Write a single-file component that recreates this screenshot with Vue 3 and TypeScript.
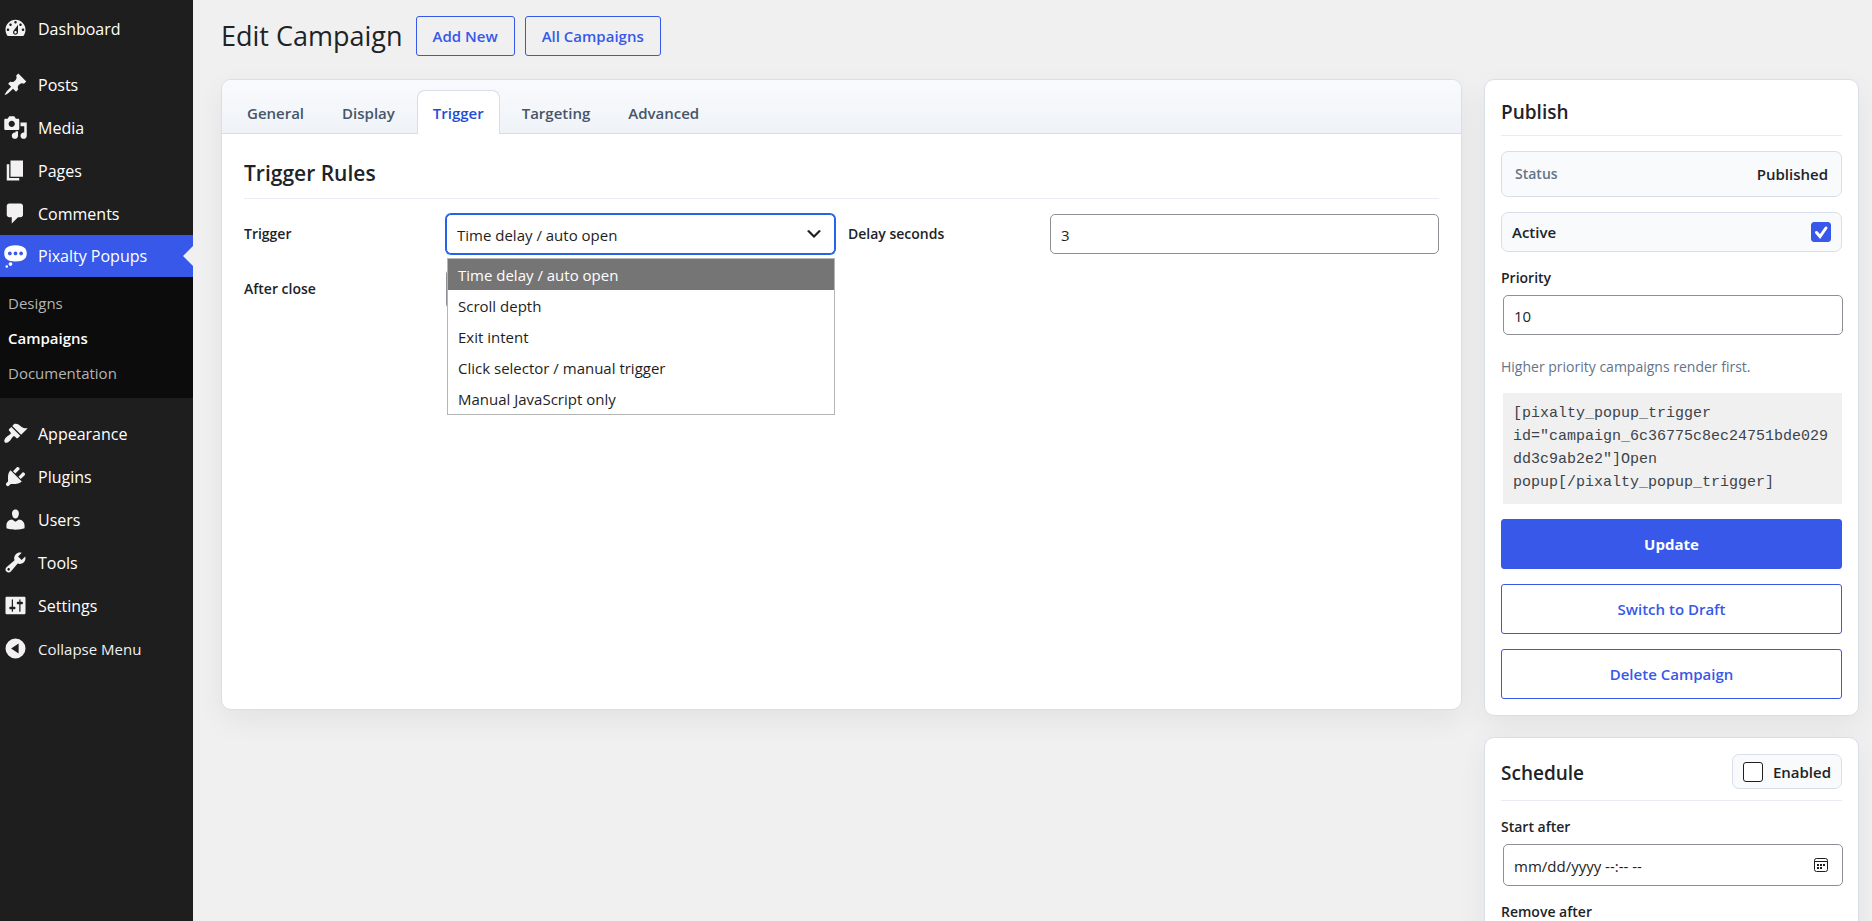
<script setup lang="ts">
import { ref } from 'vue'

interface MenuItem {
  label: string
  path: string
  current?: boolean
  gap?: boolean
  small?: boolean
}

const topMenu: MenuItem[] = [
  { label: 'Dashboard', path: 'M3.76 16h12.48c1.1-1.37 1.76-3.11 1.76-5 0-4.42-3.58-8-8-8s-8 3.58-8 8c0 1.89.66 3.63 1.76 5zM10 4c.55 0 1 .45 1 1s-.45 1-1 1-1-.45-1-1 .45-1 1-1zM6 6c.55 0 1 .45 1 1s-.45 1-1 1-1-.45-1-1 .45-1 1-1zm8 0c.55 0 1 .45 1 1s-.45 1-1 1-1-.45-1-1 .45-1 1-1zm-5.37 5.55L12 7v6c0 1.1-.9 2-2 2s-2-.9-2-2c0-.57.24-1.08.63-1.45zM4 10c.55 0 1 .45 1 1s-.45 1-1 1-1-.45-1-1 .45-1 1-1zm12 0c.55 0 1 .45 1 1s-.45 1-1 1-1-.45-1-1 .45-1 1-1zm-5 3c0-.55-.45-1-1-1s-1 .45-1 1 .45 1 1 1 1-.45 1-1z' },
  { label: 'Posts', gap: true, path: 'M10.44 3.02l1.82-1.82 6.36 6.35-1.83 1.82c-1.05-.68-2.48-.57-3.41.36l-.75.75c-.92.93-1.04 2.35-.35 3.41l-1.83 1.82-2.41-2.41-2.8 2.79c-.42.42-3.38 2.71-3.8 2.29s1.86-3.39 2.28-3.81l2.79-2.79L4.1 9.36l1.83-1.82c1.05.69 2.48.57 3.4-.36l.75-.75c.93-.92 1.05-2.35.36-3.41z' },
  { label: 'Media', path: 'M13 11V4c0-.55-.45-1-1-1h-1.67L9 1H5L3.67 3H2c-.55 0-1 .45-1 1v7c0 .55.45 1 1 1h10c.55 0 1-.45 1-1zM7 4.5c1.38 0 2.5 1.12 2.5 2.5S8.38 9.5 7 9.5 4.5 8.38 4.5 7 5.62 4.5 7 4.5zM14 6h5v10.5c0 1.38-1.12 2.5-2.5 2.5S14 17.88 14 16.5s1.12-2.5 2.5-2.5c.17 0 .34.02.5.05V9h-3V6zm-4 8.05V13h2v3.5c0 1.38-1.12 2.5-2.5 2.5S7 17.88 7 16.5 8.12 14 9.5 14c.17 0 .34.02.5.05z' },
  { label: 'Pages', path: 'M6 15V2h10v13H6zm-1 1h8v2H3V5h2v11z' },
  { label: 'Comments', path: 'M5 2h9c1.1 0 2 .9 2 2v7c0 1.1-.9 2-2 2h-2l-5 5v-5H5c-1.1 0-2-.9-2-2V4c0-1.1.9-2 2-2z' },
  { label: 'Pixalty Popups', current: true, path: 'M10 1c7 0 9 2.91 9 6.5S17 14 10 14s-9-2.91-9-6.5S3 1 10 1zM5.5 9C6.33 9 7 8.33 7 7.5S6.33 6 5.5 6 4 6.67 4 7.5 4.67 9 5.5 9zM10 9c.83 0 1.5-.67 1.5-1.5S10.83 6 10 6s-1.5.67-1.5 1.5S9.17 9 10 9zm4.5 0c.83 0 1.5-.67 1.5-1.5S15.33 6 14.5 6 13 6.67 13 7.5 13.67 9 14.5 9zM6 14.5c.83 0 1.5.67 1.5 1.5s-.67 1.5-1.5 1.5-1.5-.67-1.5-1.5.67-1.5 1.5-1.5zM3 17c.55 0 1 .45 1 1s-.45 1-1 1-1-.45-1-1 .45-1 1-1z' },
]

const subMenu = [
  { label: 'Designs', current: false },
  { label: 'Campaigns', current: true },
  { label: 'Documentation', current: false },
]

const lowerMenu: MenuItem[] = [
  { label: 'Appearance', path: 'M14.48 11.06L7.41 3.99l1.5-1.5c.5-.56 2.3-.47 3.51.32 1.21.8 1.43 1.28 2.91 2.1 1.18.64 2.45 1.26 4.45.85zm-.71.71L6.7 4.7 4.93 6.47c-.39.39-.39 1.02 0 1.41l1.06 1.06c.39.39.39 1.03 0 1.42-.6.6-1.43 1.11-2.21 1.69-.35.26-.7.53-1.01.84C1.43 14.23.4 16.08 1.4 17.07c.99 1 2.84-.03 4.18-1.36.31-.31.58-.66.85-1.02.57-.78 1.08-1.61 1.69-2.21.39-.39 1.02-.39 1.41 0l1.06 1.06c.39.39 1.02.39 1.41 0z' },
  { label: 'Plugins', path: 'M13.11 4.36L9.87 7.6 8 5.73l3.24-3.24c.35-.34 1.05-.2 1.56.32.52.51.66 1.21.31 1.55zm-8 1.77l.91-1.12 9.01 9.01-1.19.84c-.71.71-2.63 1.16-3.82 1.16H6.14L4.9 17.26c-.59.59-1.54.59-2.12 0-.59-.58-.59-1.53 0-2.12l1.24-1.24v-3.88c0-1.13.4-3.19 1.09-3.89zm7.26 3.97l3.24-3.24c.34-.35 1.04-.21 1.55.31.52.51.66 1.21.31 1.55l-3.24 3.25z' },
  { label: 'Users', path: 'M10 9.25c-2.27 0-2.73-3.44-2.73-3.44C7 4.02 7.82 2 9.97 2c2.16 0 2.98 2.02 2.71 3.81 0 0-.41 3.44-2.68 3.44zm0 2.57L12.72 10c2.39 0 4.52 2.33 4.52 4.53v2.49s-3.65 1.13-7.24 1.13c-3.65 0-7.24-1.13-7.24-1.13v-2.49c0-2.25 1.94-4.48 4.47-4.48z' },
  { label: 'Tools', path: 'M16.68 9.77c-1.34 1.34-3.3 1.67-4.95.99l-5.41 6.52c-.99.99-2.59.99-3.58 0s-.99-2.59 0-3.57l6.52-5.42c-.68-1.65-.35-3.61.99-4.95 1.28-1.28 3.12-1.62 4.72-1.06l-2.89 2.89 2.82 2.82 2.86-2.87c.53 1.58.18 3.39-1.08 4.65zM3.81 16.21c.4.39 1.04.39 1.43 0 .4-.4.4-1.04 0-1.43-.39-.4-1.03-.4-1.43 0-.39.39-.39 1.03 0 1.43z' },
  { label: 'Settings', path: 'M18 16V4c0-.55-.45-1-1-1H3c-.55 0-1 .45-1 1v12c0 .55.45 1 1 1h14c.55 0 1-.45 1-1zM8 11h1c.55 0 1 .45 1 1s-.45 1-1 1H8v1.5c0 .28-.22.5-.5.5s-.5-.22-.5-.5V13H6c-.55 0-1-.45-1-1s.45-1 1-1h1V5.5c0-.28.22-.5.5-.5s.5.22.5.5V11zm5-2h-1c-.55 0-1-.45-1-1s.45-1 1-1h1V5.5c0-.28.22-.5.5-.5s.5.22.5.5V7h1c.55 0 1 .45 1 1s-.45 1-1 1h-1v5.5c0 .28-.22.5-.5.5s-.5-.22-.5-.5V9z' },
  { label: 'Collapse Menu', small: true, path: 'M10 2a8 8 0 1 0 0 16a8 8 0 1 0 0-16zM12.5 6v8L6.5 10z' },
]

const tabs = ['General', 'Display', 'Trigger', 'Targeting', 'Advanced']
const activeTab = ref('Trigger')

const triggers = [
  'Time delay / auto open',
  'Scroll depth',
  'Exit intent',
  'Click selector / manual trigger',
  'Manual JavaScript only',
]
const trigger = ref(triggers[0])
const delay = ref('3')
const afterClose = ref('')
const active = ref(true)
const priority = ref('10')
const scheduled = ref(false)
const startAfter = ref('')
const removeAfter = ref('')
</script>

<template>
  <div class="app">
    <nav class="sidebar">
      <template v-for="item in topMenu" :key="item.label">
        <a href="#" class="menu-item" :class="{ current: item.current, spaced: item.gap }">
          <svg class="menu-icon" viewBox="0 0 20 20" aria-hidden="true"><path :d="item.path" fill-rule="evenodd" /></svg>
          <span>{{ item.label }}</span>
        </a>
      </template>
      <div class="submenu">
        <a v-for="item in subMenu" :key="item.label" href="#" :class="{ current: item.current }">{{ item.label }}</a>
      </div>
      <template v-for="item in lowerMenu" :key="item.label">
        <a href="#" class="menu-item" :class="{ small: item.small }">
          <svg class="menu-icon" viewBox="0 0 20 20" aria-hidden="true"><path :d="item.path" fill-rule="evenodd" /></svg>
          <span>{{ item.label }}</span>
        </a>
      </template>
    </nav>

    <main class="content">
      <header class="page-head">
        <h1>Edit Campaign</h1>
        <a href="#" class="btn">Add New</a>
        <a href="#" class="btn">All Campaigns</a>
      </header>

      <div class="columns">
        <section class="panel editor">
          <div class="tabs" role="tablist">
            <button
              v-for="tab in tabs"
              :key="tab"
              type="button"
              role="tab"
              :aria-selected="tab === activeTab"
              :class="{ active: tab === activeTab }"
              @click="activeTab = tab"
            >{{ tab }}</button>
          </div>
          <div class="editor-body">
            <h2>Trigger Rules</h2>
            <div class="fields">
              <div class="field">
                <label for="trigger">Trigger</label>
                <div class="select-wrap">
                  <select id="trigger" v-model="trigger" class="control focused">
                    <option v-for="t in triggers" :key="t">{{ t }}</option>
                  </select>
                  <svg class="chevron" viewBox="0 0 20 20" aria-hidden="true"><path d="M5 6l5 5 5-5 2 1-7 7-7-7z" /></svg>
                  <ul class="options">
                    <li v-for="t in triggers" :key="t" :class="{ selected: t === trigger }" @click="trigger = t">{{ t }}</li>
                  </ul>
                </div>
              </div>
              <div class="field">
                <label for="delay">Delay seconds</label>
                <input id="delay" v-model="delay" type="text" class="control" />
              </div>
              <div class="field">
                <label for="after-close">After close</label>
                <select id="after-close" v-model="afterClose" class="control"></select>
              </div>
            </div>
          </div>
        </section>

        <aside class="side">
          <section class="panel card">
            <div class="card-head"><h3>Publish</h3></div>
            <div class="box status"><span>Status</span><strong>Published</strong></div>
            <label class="box toggle wide">
              <span>Active</span>
              <span class="check">
                <input v-model="active" type="checkbox" />
                <svg v-if="active" viewBox="0 0 20 20" aria-hidden="true"><path d="M5.500 10.500L9 14.500L15 6" /></svg>
              </span>
            </label>
            <div class="stack">
              <label for="priority">Priority</label>
              <input id="priority" v-model="priority" type="text" class="control" />
            </div>
            <p class="help">Higher priority campaigns render first.</p>
            <code>[pixalty_popup_trigger id="campaign_6c36775c8ec24751bde029dd3c9ab2e2"]Open popup[/pixalty_popup_trigger]</code>
            <button type="button" class="btn block primary">Update</button>
            <button type="button" class="btn block">Switch to Draft</button>
            <button type="button" class="btn block">Delete Campaign</button>
          </section>

          <section class="panel card">
            <div class="card-head with-toggle">
              <h3>Schedule</h3>
              <label class="box toggle">
                <span class="check">
                  <input v-model="scheduled" type="checkbox" />
                  <svg v-if="scheduled" viewBox="0 0 20 20" aria-hidden="true"><path d="M5.500 10.500L9 14.500L15 6" /></svg>
                </span>
                <span>Enabled</span>
              </label>
            </div>
            <div class="stack">
              <label for="start-after">Start after</label>
              <div class="date-wrap">
                <input id="start-after" v-model="startAfter" type="text" placeholder="mm/dd/yyyy --:-- --" class="control date" />
                <svg class="calendar" viewBox="0 0 16 16" aria-hidden="true">
                  <rect x="1.500" y="1.500" width="13" height="13" rx="2" fill="none" stroke="#1e1e1e" />
                  <path d="M1 4h14v1H1zM7 7h2v2H7zM10 7h2v2h-2zM4 7h2v2H4zM4 10h2v2H4zM7 10h2v2H7z" />
                </svg>
              </div>
            </div>
            <div class="stack">
              <label for="remove-after">Remove after</label>
              <input id="remove-after" v-model="removeAfter" type="text" placeholder="mm/dd/yyyy --:-- --" class="control date" />
            </div>
          </section>
        </aside>
      </div>
    </main>
  </div>
</template>

<style>
body {
  background: #f0f0f0;
}
</style>

<style scoped>
.app,
.app * {
  box-sizing: border-box;
}
.app {
  display: flex;
  height: 100vh;
  overflow: hidden;
  background: #f0f0f0;
  color: #1d2327;
  font-family: 'Open Sans', 'Noto Sans', sans-serif;
  font-size: 15px;
  line-height: 22px;
}
h1, h2, h3, p, ul {
  margin: 0;
  padding: 0;
}
a {
  text-decoration: none;
}
button, input, select {
  font-family: inherit;
}

.sidebar {
  flex: 0 0 193px;
  padding-top: 7px;
  background: #1e1e1e;
}
.menu-item {
  position: relative;
  display: flex;
  align-items: center;
  gap: 10px;
  height: 43px;
  padding-left: 3px;
  color: #fff;
  font-size: 16px;
}
.menu-item.spaced {
  margin-top: 13px;
}
.menu-item.small {
  color: #f0f0f1;
  font-size: 15px;
}
.menu-icon {
  width: 25px;
  height: 25px;
  fill: #f3f1f1;
}
.menu-item.current {
  height: 42px;
  background: #3858e9;
}
.menu-item.current .menu-icon {
  fill: #fff;
}
.menu-item.current::after {
  content: '';
  position: absolute;
  right: 0;
  top: 11px;
  border: 10px solid transparent;
  border-right-color: #f0f0f0;
  border-left-width: 0;
}
.submenu {
  display: flex;
  flex-direction: column;
  margin-bottom: 14px;
  padding: 9px 8px 7px;
  background: #0c0c0c;
}
.submenu a {
  color: #b4b4b4;
  line-height: 35px;
}
.submenu a.current {
  color: #fff;
  font-weight: 600;
}

.content {
  flex: 1;
  min-width: 0;
  padding: 16px 13px 0 28px;
}
.page-head {
  display: flex;
  align-items: center;
  gap: 10px;
  margin-bottom: 23px;
}
h1 {
  margin-right: 3px;
  font-size: 27px;
  line-height: 40px;
  font-weight: 400;
}
.btn {
  display: inline-flex;
  align-items: center;
  justify-content: center;
  height: 40px;
  padding: 0 16px;
  border: 1px solid #3858e9;
  border-radius: 3px;
  background: transparent;
  color: #3858e9;
  font-size: 15px;
  font-weight: 600;
}
.columns {
  display: grid;
  grid-template-columns: minmax(0, 1fr) 375px;
  align-items: start;
  gap: 22px;
}
.panel {
  border: 1px solid #d8dfea;
  border-radius: 10px;
  background: #fff;
  box-shadow: 0 10px 30px rgba(0, 0, 0, 0.06);
}
.editor {
  min-height: 631px;
}
.tabs {
  display: flex;
  gap: 6px;
  height: 54px;
  padding: 10px 9px 0;
  border-bottom: 1px solid #d5dce6;
  border-radius: 9px 9px 0 0;
  background: linear-gradient(#f9fafd, #eff3f8);
}
.tabs button {
  height: 44px;
  padding: 0 15px;
  border: 1px solid transparent;
  border-bottom: 0;
  border-radius: 8px 8px 0 0;
  background: transparent;
  color: #475569;
  font-size: 15px;
  font-weight: 600;
}
.tabs button.active {
  border-color: #d8dfea;
  background: #fff;
  color: #1d4ed8;
}
.editor-body {
  padding: 22px;
}
h2 {
  margin-bottom: 15px;
  padding-bottom: 8px;
  border-bottom: 1px solid #e9edf3;
  font-size: 21px;
  line-height: 34px;
  font-weight: 600;
}
.fields {
  display: grid;
  grid-template-columns: 1fr 1fr;
  gap: 15px 13px;
}
.field {
  display: grid;
  grid-template-columns: 202px minmax(0, 1fr);
  align-items: center;
}
label {
  font-size: 14px;
  font-weight: 600;
}
.control {
  width: 100%;
  height: 40px;
  padding: 1px 10px 0;
  border: 1px solid #8c8f94;
  border-radius: 5px;
  background: #fff;
  color: #1e1e1e;
  font-size: 15px;
  outline: none;
}
.control::placeholder {
  color: #1e1e1e;
  opacity: 1;
}
select.control {
  appearance: none;
}
.control.focused {
  border-color: #2563eb;
  box-shadow: 0 0 0 1px #2563eb;
}
.select-wrap,
.date-wrap {
  position: relative;
}
.chevron {
  position: absolute;
  right: 11px;
  top: 10px;
  width: 20px;
  height: 20px;
  fill: #1e1e1e;
  pointer-events: none;
}
.options {
  position: absolute;
  z-index: 2;
  top: 44px;
  left: 1px;
  right: 0;
  border: 1px solid #b5b5b5;
  background: #fff;
  list-style: none;
}
.options li {
  padding: 1px 10px 0;
  color: #1e1e1e;
  line-height: 30px;
}
.options li.selected {
  background: #757575;
  color: #fff;
}

.side {
  display: flex;
  flex-direction: column;
  gap: 21px;
}
.card {
  display: flex;
  flex-direction: column;
  gap: 15px;
  padding: 16px;
}
.card-head {
  display: flex;
  align-items: flex-start;
  justify-content: space-between;
  height: 40px;
  border-bottom: 1px solid #e9edf3;
}
.card-head.with-toggle {
  height: 47px;
}
h3 {
  font-size: 19px;
  line-height: 32px;
  font-weight: 600;
}
.with-toggle h3 {
  line-height: 38px;
}
.box {
  display: flex;
  align-items: center;
  border: 1px solid #d8dfea;
  border-radius: 7px;
  background: #f8fafc;
  font-weight: 600;
}
.status {
  justify-content: space-between;
  height: 46px;
  padding: 0 13px;
}
.status span {
  color: #64748b;
  font-size: 14px;
}
.status strong {
  font-size: 15px;
  font-weight: 600;
}
.toggle {
  gap: 10px;
  height: 35px;
  padding: 0 10px;
  font-size: 15px;
}
.toggle.wide {
  justify-content: space-between;
  height: 40px;
}
.check {
  position: relative;
  width: 20px;
  height: 20px;
}
.check input {
  display: block;
  appearance: none;
  width: 20px;
  height: 20px;
  margin: 0;
  border: 1px solid #1e1e1e;
  border-radius: 3px;
  background: #fff;
}
.check input:checked {
  border-color: #3858e9;
  background: #3858e9;
}
.check svg {
  position: absolute;
  inset: 0;
  fill: none;
  stroke: #fff;
  stroke-width: 3;
  stroke-linecap: round;
  pointer-events: none;
}
.stack {
  display: flex;
  flex-direction: column;
  gap: 6px;
}
.stack > .control,
.date-wrap {
  width: auto;
  margin: 0 -1px 0 2px;
}
.control.date {
  height: 42px;
}
.calendar {
  position: absolute;
  right: 14px;
  top: 13px;
  width: 16px;
  height: 16px;
  fill: #1e1e1e;
  pointer-events: none;
}
.help {
  padding-top: 6px;
  color: #64748b;
  font-size: 14px;
}
code {
  margin-left: 2px;
  padding: 9px 10px 10px;
  background: #f0f0f0;
  color: #3c434a;
  font-family: 'Liberation Mono', monospace;
  font-size: 15px;
  line-height: 23px;
  overflow-wrap: anywhere;
}
.btn.block {
  height: 50px;
}
.btn.primary {
  background: #3858e9;
  color: #fff;
  font-weight: 700;
}
</style>
